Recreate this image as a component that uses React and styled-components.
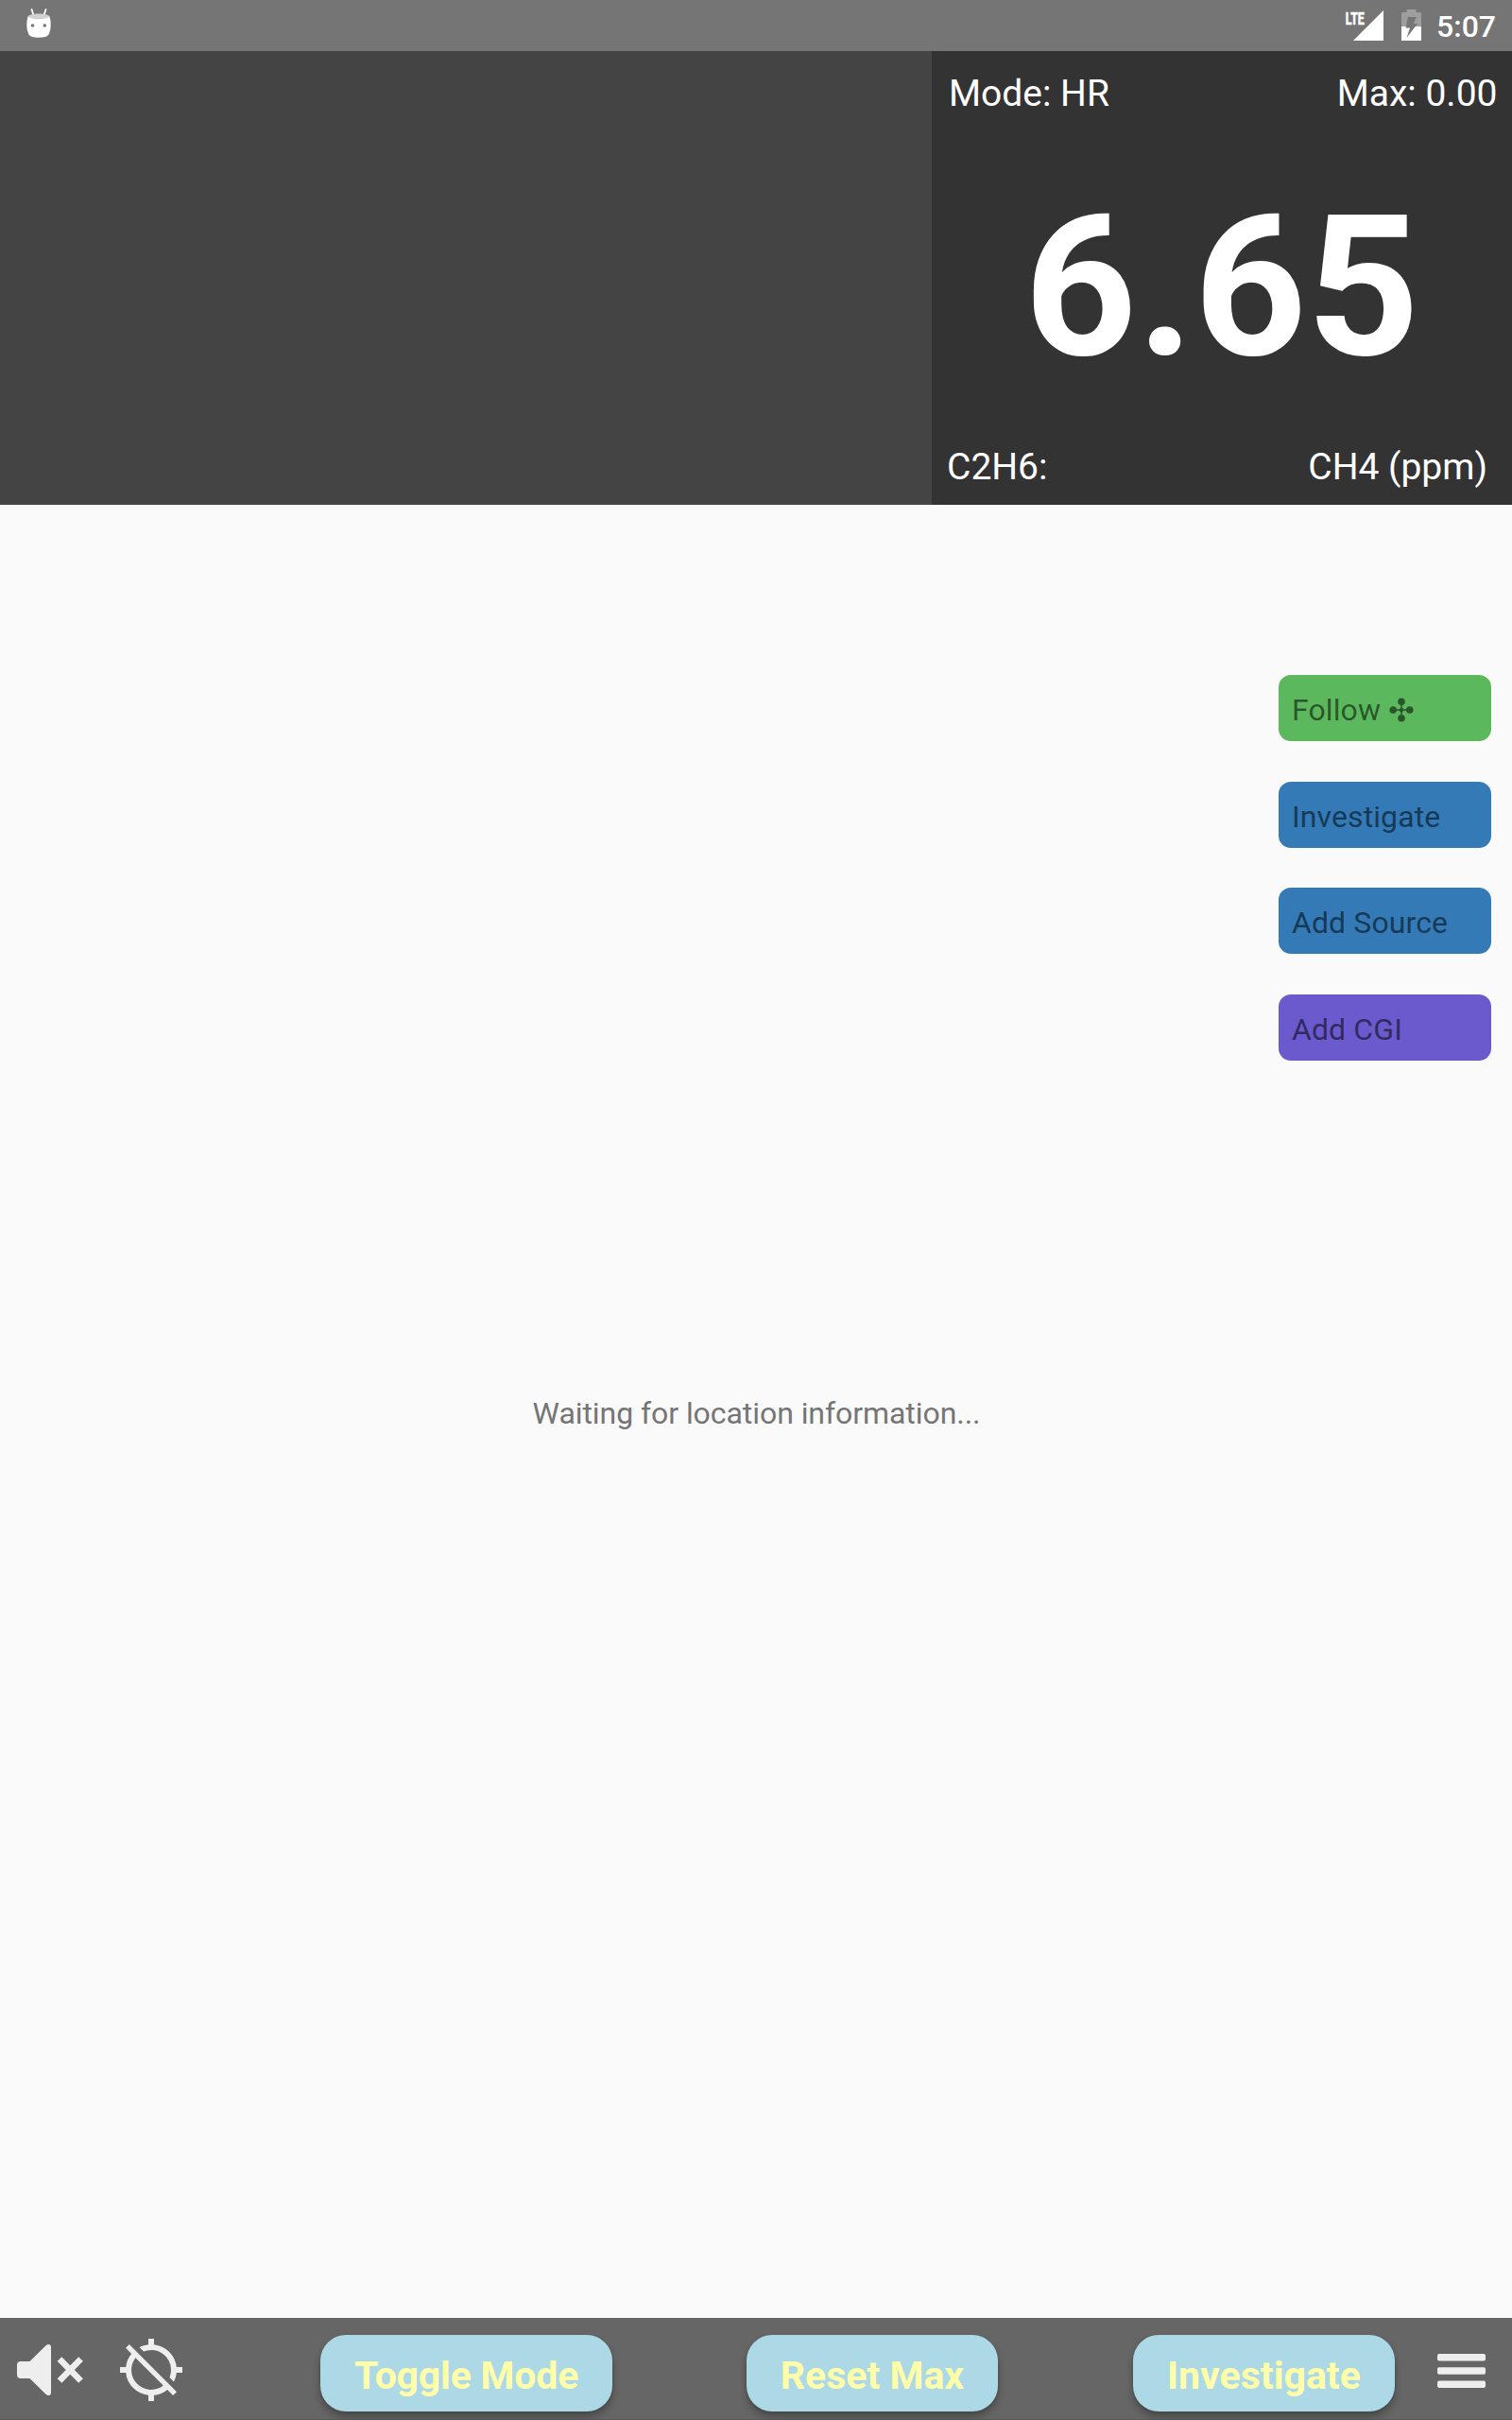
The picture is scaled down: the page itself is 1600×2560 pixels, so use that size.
import React from "react";
import styled, { createGlobalStyle } from "styled-components";
import { MdLocationDisabled } from "react-icons/md";

const GlobalStyle = createGlobalStyle`
  * { box-sizing: border-box; }
  body { margin: 0; background: #fafafa; }
`;

const Screen = styled.div`
  display: flex;
  flex-direction: column;
  width: 1600px;
  height: 2560px;
  overflow: hidden;
  background: #fafafa;
  font-family: Roboto, sans-serif;
`;

const StatusBar = styled.header`
  display: flex;
  align-items: flex-start;
  justify-content: space-between;
  height: 54px;
  flex: none;
  padding: 8px 17px 0 27px;
  background: #757575;
`;

const StatusIcons = styled.div`
  display: flex;
  align-items: flex-start;
`;

const StatusGlyph = styled.svg`
  display: block;
  margin-right: ${(p) => p.$gap || 0}px;
`;

const Clock = styled.time`
  font-size: 32px;
  line-height: 38px;
  padding-top: 1px;
  font-weight: 500;
  color: #fff;
`;

const Dashboard = styled.section`
  display: flex;
  flex: none;
  height: 480px;
`;

const ChartArea = styled.div`
  width: 986px;
  background: #444;
`;

const Reading = styled.div`
  flex: 1;
  display: flex;
  flex-direction: column;
  padding: 22px 0 17px;
  background: #333;
  color: #fff;
`;

const ReadingRow = styled.div`
  display: flex;
  justify-content: space-between;
  font-size: 39px;
  line-height: 46px;
  padding: ${(p) => p.$inset};
`;

const Value = styled.div`
  flex: 1;
  display: flex;
  align-items: center;
  justify-content: center;
  padding-top: 14px;
  font-size: 208px;
  line-height: 244px;
  font-weight: 700;
`;

const MapArea = styled.main`
  flex: 1;
  display: grid;
`;

const MapActions = styled.nav`
  grid-area: 1 / 1;
  justify-self: end;
  display: flex;
  flex-direction: column;
  gap: 42.67px;
  padding: 180px 22px 0 0;
`;

const MapButton = styled.button`
  display: flex;
  align-items: center;
  gap: 9px;
  width: 225px;
  height: 70px;
  padding: 4px 14px 0;
  border: 0;
  border-radius: 13px;
  background: ${(p) => p.$color};
  color: rgba(0, 0, 0, 0.54);
  font: 400 32px/38px Roboto, sans-serif;
  letter-spacing: 0.1px;
`;

const Waiting = styled.p`
  grid-area: 1 / 1;
  align-self: center;
  justify-self: center;
  margin: 0;
  padding: 4px 0 0 1px;
  font-size: 32px;
  line-height: 38px;
  letter-spacing: -0.06px;
  color: #757575;
`;

const BottomBar = styled.footer`
  display: flex;
  align-items: flex-start;
  flex: none;
  height: 108px;
  padding: 18px 28px 0 18px;
  background: #666;
  box-shadow: inset 0 -1px 0 #5b5b5b;
`;

const BarIcon = styled.span`
  display: flex;
  margin: ${(p) => p.$margin};
  color: #eee;
  svg { display: block; }
`;

const BarButton = styled.button`
  width: ${(p) => p.$width}px;
  height: 81px;
  margin-left: ${(p) => p.$before}px;
  padding: 5px 0 0;
  border: 0;
  border-radius: 27px;
  background: #add8e6;
  color: #ffa;
  box-shadow: 0 6px 8px rgba(0, 0, 0, 0.28), 0 1px 3px rgba(0, 0, 0, 0.12);
  font: 700 41px/48px Roboto, sans-serif;
  letter-spacing: ${(p) => p.$tracking || 0}px;
  white-space: nowrap;
`;

function AndroidHead() {
  return (
    <StatusGlyph width="28" height="33" viewBox="27 8 28 33">
      <path d="M33.5 10l2 6M48.500 10l-2 6" stroke="#fff" strokeWidth="1.8" strokeLinecap="round" />
      <path d="M29.500 17.500Q41 22 52.500 17.500Q53.700 21 53.700 27Q53.700 33 51.500 36.500Q49.500 39.700 41 39.700Q32.500 39.700 30.500 36.500Q28.300 33 28.300 27Q28.300 21 29.500 17.500z" fill="#fff" />
      <path d="M29.500 17.500C31 13.500 51 13.500 52.500 17.500C51 20.500 31 20.500 29.500 17.500z" fill="#d2d2d2" />
      <circle cx="34.500" cy="27" r="1.800" fill="#757575" />
      <circle cx="47.300" cy="27" r="1.800" fill="#757575" />
    </StatusGlyph>
  );
}

function Signal() {
  return (
    <StatusGlyph width="42" height="36" viewBox="1423 8 42 36" $gap={18}>
      <path d="M1464 11V43H1432z" fill="#fff" />
      <text x="1423.800" y="25.600" fontSize="19" fontWeight="700" textLength="20" lengthAdjust="spacingAndGlyphs" fill="#fff" stroke="#fff" strokeWidth="0.6">LTE</text>
    </StatusGlyph>
  );
}

function Battery() {
  return (
    <StatusGlyph width="21" height="36" viewBox="1483 8 21 36" $gap={16}>
      <path d="M1483 28V14.500Q1483 13 1484.500 13H1488.500V10H1498.500V13H1502.500Q1504 13 1504 14.500V28z" fill="#9e9e9e" />
      <path d="M1483 28H1504V43H1483z" fill="#fff" />
      <path d="M1490 18H1499L1495.500 25H1500L1488.500 40L1492 29.500H1487.500z" fill="#757575" />
    </StatusGlyph>
  );
}

function Muted() {
  return (
    <svg width="71" height="54" viewBox="0 0 71 54">
      <path d="M4 18H13.500L30.500 1.200Q32 0 33.500 0Q36 0 36 3V51Q36 54 33.500 54Q32 54 30.500 52.800L13.500 36H4Q0 36 0 32V22Q0 18 4 18z" fill="currentColor" />
      <path d="M45 15.500L67.500 38.500M67.500 15.500L45 38.500" stroke="currentColor" strokeWidth="6.600" />
    </svg>
  );
}

function MenuBars() {
  return (
    <svg width="51" height="36" viewBox="0 0 51 36" fill="currentColor">
      <rect width="51" height="7.500" rx="1.800" />
      <rect y="14.200" width="51" height="7.500" rx="1.800" />
      <rect y="28.400" width="51" height="7.500" rx="1.800" />
    </svg>
  );
}

function FollowMark() {
  return (
    <svg width="26" height="26" viewBox="0 0 26 26" fill="currentColor">
      <path d="M12.500 4H13.500L14 13L13.500 22H12.500L12 13z M4 12.500L13 12L22 12.500V13.500L13 14L4 13.500z M13 10.700a2.300 2.300 0 1 1 0 4.600a2.300 2.300 0 1 1 0 -4.600z M13 0.400a3.800 3.800 0 1 1 0 7.600a3.800 3.800 0 1 1 0 -7.600z M13 18a3.800 3.800 0 1 1 0 7.600a3.800 3.800 0 1 1 0 -7.600z M4.200 9.200a3.800 3.800 0 1 1 0 7.600a3.800 3.800 0 1 1 0 -7.600z M21.800 9.200a3.800 3.800 0 1 1 0 7.600a3.800 3.800 0 1 1 0 -7.600z" />
    </svg>
  );
}

export default function App() {
  return (
    <Screen>
      <GlobalStyle />
      <StatusBar>
        <AndroidHead />
        <StatusIcons>
          <Signal />
          <Battery />
          <Clock>5:07</Clock>
        </StatusIcons>
      </StatusBar>
      <Dashboard>
        <ChartArea />
        <Reading>
          <ReadingRow $inset="0 15.5px 0 18px">
            <span>Mode: HR</span>
            <span>Max: 0.00</span>
          </ReadingRow>
          <Value>6.65</Value>
          <ReadingRow $inset="0 26px 0 16px">
            <span>C2H6:</span>
            <span>CH4 (ppm)</span>
          </ReadingRow>
        </Reading>
      </Dashboard>
      <MapArea>
        <Waiting>Waiting for location information...</Waiting>
        <MapActions>
          <MapButton $color="#5cb85c">
            Follow <FollowMark />
          </MapButton>
          <MapButton $color="#337ab7">Investigate</MapButton>
          <MapButton $color="#337ab7">Add Source</MapButton>
          <MapButton $color="#6a5acd">Add CGI</MapButton>
        </MapActions>
      </MapArea>
      <BottomBar>
        <BarIcon $margin="10px 0 0"><Muted /></BarIcon>
        <BarIcon $margin="1px 0 0 35px"><MdLocationDisabled size={72} /></BarIcon>
        <BarButton $before={143} $width={309} $tracking={-0.2}>Toggle Mode</BarButton>
        <BarButton $before={142} $width={266}>Reset Max</BarButton>
        <BarButton $before={143} $width={277}>Investigate</BarButton>
        <BarIcon $margin="20px 0 0 44.5px"><MenuBars /></BarIcon>
      </BottomBar>
    </Screen>
  );
}
